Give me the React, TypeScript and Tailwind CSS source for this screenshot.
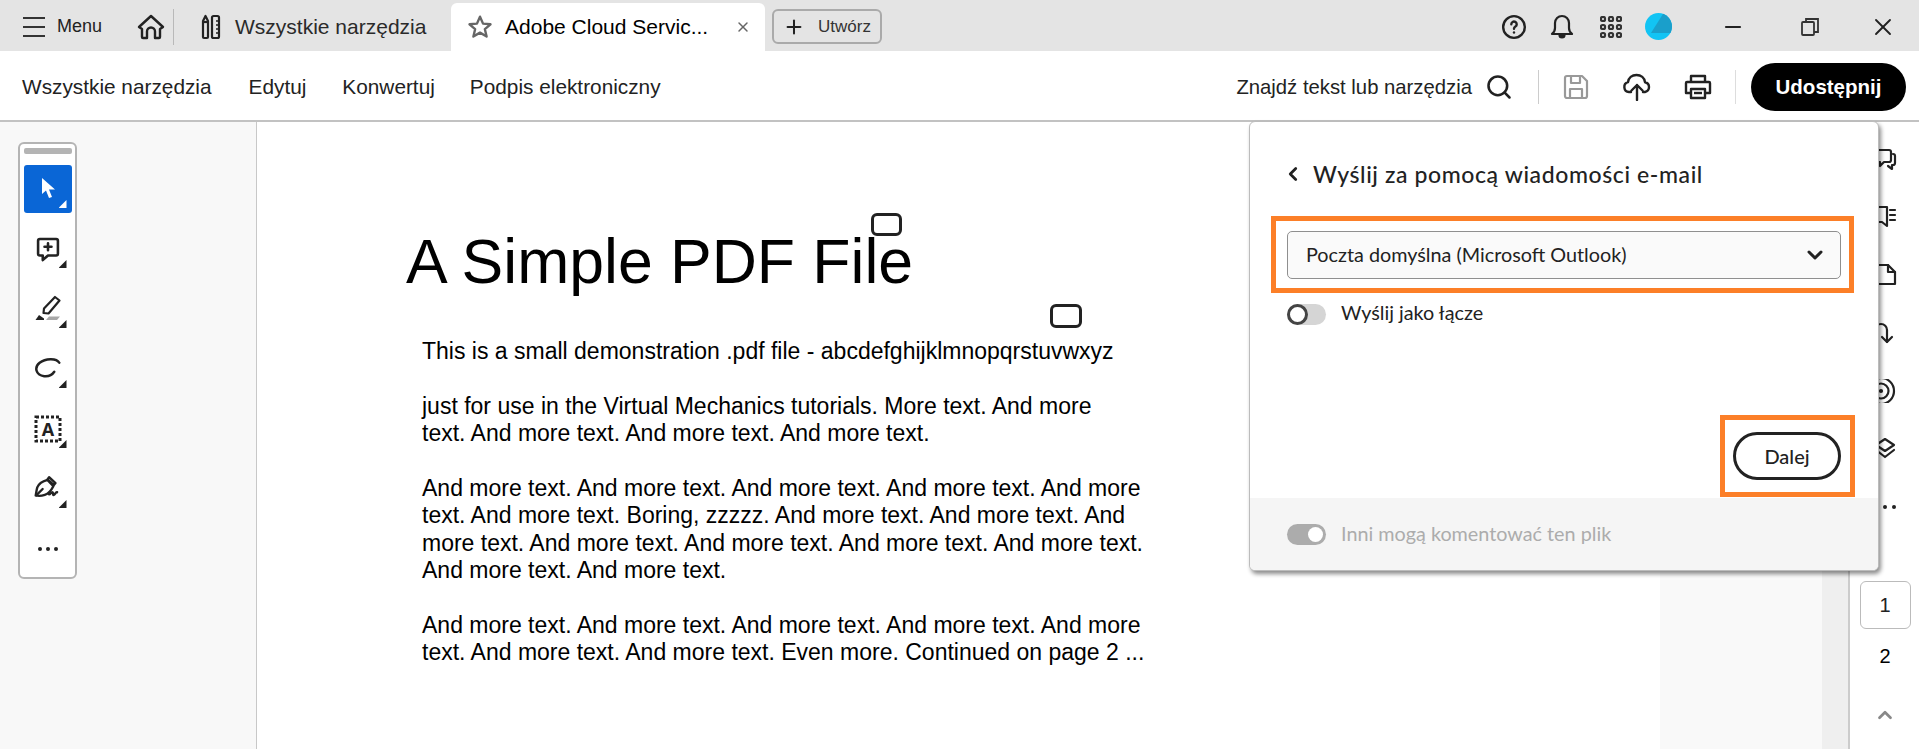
import React from "react";
import { ChevronLeft, ChevronDown, ChevronUp, Minus, Plus, Search, X } from "lucide-react";

const arial = { fontFamily: '"Liberation Sans", Arial, sans-serif' };

function Svg({ size = 24, sw = 2, children, className = "" }: { size?: number; sw?: number; children: React.ReactNode; className?: string }) {
  return (
    <svg width={size} height={size} viewBox="0 0 24 24" fill="none" stroke="currentColor" strokeWidth={sw} strokeLinecap="round" strokeLinejoin="round" className={className}>
      {children}
    </svg>
  );
}

function ToolButton({ children, active = false }: { children: React.ReactNode; active?: boolean }) {
  return (
    <div className={`relative flex h-12 w-12 items-center justify-center rounded-[3px] ${active ? "bg-[#0a66d6] text-white" : "text-[#222222]"}`}>
      {children}
      <span className={`absolute bottom-[5px] right-[5px] h-2 w-2 [clip-path:polygon(100%_0,100%_100%,0_100%)] ${active ? "bg-white" : "bg-[#222222]"}`} />
    </div>
  );
}

function Toolbar() {
  return (
    <div className="mt-5 ml-[18px] flex h-[437px] w-[59px] flex-col items-center rounded-[6px] border-2 border-[#b4b4b4] bg-white pt-1">
      <div className="h-[6px] w-12 rounded-[2px] bg-[#b4b4b4]" />
      <div className="mt-[11px] flex flex-col gap-3">
        <ToolButton active>
          <svg width="24" height="24" viewBox="0 0 24 24"><path d="M6 1v16l4-3.500L13 21l3-1-3-7.500h6z" fill="currentColor" /></svg>
        </ToolButton>
        <ToolButton>
          <Svg size={28} sw={2.200}>
            <path d="M5 3.500h14a1.500 1.500 0 0 1 1.500 1.500v11a1.500 1.500 0 0 1-1.500 1.500h-7l-4.500 4v-4H5A1.500 1.500 0 0 1 3.500 16V5A1.500 1.500 0 0 1 5 3.500z" />
            <path d="M12 7v6M9 10h6" />
          </Svg>
        </ToolButton>
        <ToolButton>
          <svg width="28" height="28" viewBox="0 0 28 28" fill="none" stroke="currentColor" strokeWidth="2.200" strokeLinejoin="round">
            <path d="M21 2l4.500 3.500-11 13-5-.5.500-4.500z" />
            <path d="M1.500 25l3.500-5 5 3.500v1.500z" fill="currentColor" stroke="none" />
            <path d="M12 25l3-3.500h11L23 25z" fill="#a8a8a8" stroke="none" />
          </svg>
        </ToolButton>
        <ToolButton>
          <Svg size={27} sw={2.200}>
            <path d="M22.500 6C20 1.500 10 2 5 6 0 10 1.500 17 9 18c4 .5 7-1 9-4" />
          </Svg>
        </ToolButton>
        <ToolButton>
          <svg width="28" height="28" viewBox="0 0 28 28" fill="none">
            <rect x="2" y="2" width="24" height="24" stroke="currentColor" strokeWidth="3" strokeDasharray="3 2" />
            <text x="14" y="21" textAnchor="middle" fontSize="18" fontWeight="700" fill="currentColor" style={{ fontFamily: '"Open Sans", sans-serif' }}>A</text>
          </svg>
        </ToolButton>
        <ToolButton>
          <svg width="30" height="30" viewBox="0 0 28 28" fill="none" stroke="currentColor" strokeWidth="2.200" strokeLinejoin="round" strokeLinecap="round">
            <path d="M15 3l6 5.500-1.500 1.800L13.500 5z" />
            <path d="M13.500 5.500c-3.500 1-8 3-9.500 7-.8 2.500-1 5.500-1.500 7.500 2 .5 6 .3 8.500-.5 3-1 6-4 8-8z" />
            <path d="M3 20l6-6" />
            <path d="M15 19c1.500 0 1.500-2 3-2s0 3 1.500 2.500 1.500-3 3-2.500" />
          </svg>
        </ToolButton>
      </div>
      <div className="mt-[34px] flex gap-[4px]">
        <span className="h-[4px] w-[4px] rounded-full bg-[#222222]" />
        <span className="h-[4px] w-[4px] rounded-full bg-[#222222]" />
        <span className="h-[4px] w-[4px] rounded-full bg-[#222222]" />
      </div>
    </div>
  );
}

function TopBar() {
  return (
    <div className="flex h-[51px] shrink-0 items-center bg-[#e4e4e4] pt-[2px] text-[#222222]" style={arial}>
      <div className="ml-[23px] flex w-[22px] flex-col gap-[7px]">
        <span className="h-[2px] bg-[#333333]" />
        <span className="h-[2px] bg-[#333333]" />
        <span className="h-[2px] bg-[#333333]" />
      </div>
      <span className="ml-[12px] text-[18px]">Menu</span>
      <div className="ml-[35px]">
        <svg width="28" height="26" viewBox="0 0 28 26" fill="none" stroke="#222222" strokeWidth="2.400" strokeLinejoin="round">
          <path d="M2 13L14 2l12 11-3 2v8a1 1 0 0 1-1 1h-4v-6.500a4 4 0 0 0-8 0V24H6a1 1 0 0 1-1-1v-8z" />
        </svg>
      </div>
      <div className="ml-[8px] h-[36px] w-px bg-[#b9b9b9]" />
      <div className="ml-[27px]">
        <svg width="20" height="26" viewBox="0 0 20 26" fill="none" stroke="#222222" strokeWidth="2.200" strokeLinejoin="round">
          <path d="M2 7l2.500-5L7 7v16a1 1 0 0 1-1 1H3a1 1 0 0 1-1-1z" />
          <path d="M2 8h5" />
          <rect x="11" y="2" width="7" height="22" rx="1.500" />
          <path d="M15 7h3M15 11h3M15 15h3M15 19h3" strokeWidth="1.500" />
        </svg>
      </div>
      <span className="ml-[14px] w-[216px] text-[21px] text-[#2a2a2a]">Wszystkie narzędzia</span>
      <div className="-mt-[2px] flex h-[48px] w-[314px] items-center self-end rounded-t-[6px] bg-white">
        <svg className="ml-[16px]" width="26" height="26" viewBox="0 0 24 24" fill="none" stroke="#666666" strokeWidth="2.200" strokeLinejoin="round">
          <path d="M12 2.500l2.800 6.400 6.900.6-5.200 4.500 1.600 6.800L12 17.200l-6.100 3.600 1.600-6.800L2.300 9.500l6.900-.6z" />
        </svg>
        <span className="ml-[12px] w-[230px] whitespace-nowrap text-[21px] text-black">Adobe Cloud Servic...</span>
        <X size={16} strokeWidth={2.200} className="text-[#666666]" />
      </div>
      <div className="ml-[7px] flex h-[35px] w-[110px] items-center rounded-[6px] border-2 border-[#aaaaaa]">
        <Plus size={22} strokeWidth={2.200} className="ml-[9px] text-[#222222]" />
        <span className="ml-[13px] text-[17px] text-[#333333]">Utwórz</span>
      </div>
      <div className="ml-auto flex items-center">
        <Svg size={26} sw={2.200}>
          <circle cx="12" cy="12" r="10" />
          <path d="M9.500 9.500a2.500 2.500 0 1 1 3.800 2.100c-.9.600-1.300 1-1.300 2" />
          <path d="M12 17v.1" />
        </Svg>
        <svg className="ml-[23px]" width="24" height="26" viewBox="0 0 24 26" fill="none" stroke="#222222" strokeWidth="2.200" strokeLinejoin="round">
          <path d="M2 20c2-1.500 3-3 3-6V9a7 7 0 0 1 14 0v5c0 3 1 4.500 3 6z" />
          <path d="M9.500 21a2.500 2.500 0 0 0 5 0" fill="#222222" />
        </svg>
        <svg className="ml-[26px]" width="22" height="22" viewBox="0 0 22 22" fill="none" stroke="#333333" strokeWidth="2.200">
          {[3, 11, 19].map((y) => [3, 11, 19].map((x) => <rect key={`${x}-${y}`} x={x - 2} y={y - 2} width="4" height="4" rx="1.500" />))}
        </svg>
        <div className="relative ml-[23px] h-[27px] w-[27px] overflow-hidden rounded-full bg-[#12c4f4]">
          <div className="absolute left-[6px] top-0 h-[20px] w-[21px] bg-[#1a9fcb] [clip-path:polygon(60%_0,100%_0,100%_100%,0_100%)]" />
        </div>
        <Minus size={24} strokeWidth={2.200} className="ml-[49px] text-[#222222]" />
        <svg className="ml-[55px]" width="20" height="20" viewBox="0 0 20 20" fill="none" stroke="#333333" strokeWidth="1.800">
          <rect x="2" y="5" width="12" height="13" rx="1" />
          <path d="M6 5V2h12v13h-4" />
        </svg>
        <X size={28} strokeWidth={1.600} className="ml-[49px] mr-[22px] text-[#222222]" />
      </div>
    </div>
  );
}

function NavBar() {
  return (
    <div className="flex h-[71px] shrink-0 items-center border-b-2 border-[#c2c2c2] bg-white pt-[3px] text-[20.800px] text-[#222222]" style={arial}>
      <span className="ml-[22px]">Wszystkie narzędzia</span>
      <span className="ml-[37px]">Edytuj</span>
      <span className="ml-[36px]">Konwertuj</span>
      <span className="ml-[35px]">Podpis elektroniczny</span>
      <div className="ml-auto flex items-center">
        <span className="text-[20.300px]">Znajdź tekst lub narzędzia</span>
        <Search size={28} strokeWidth={2.200} className="ml-[13px]" />
        <div className="ml-[25px] h-[34px] w-px bg-[#cccccc]" />
        <svg className="ml-[24px]" width="26" height="26" viewBox="0 0 26 26" fill="none" stroke="#999999" strokeWidth="2.200" strokeLinejoin="round">
          <path d="M4 2h15l5 5v15a2 2 0 0 1-2 2H4a2 2 0 0 1-2-2V4a2 2 0 0 1 2-2z" />
          <path d="M8 2v7h9V2M7 24v-9h12v9" />
        </svg>
        <svg className="ml-[33px]" width="30" height="28" viewBox="0 0 30 28" fill="none" stroke="#222222" strokeWidth="2.400" strokeLinecap="round" strokeLinejoin="round">
          <path d="M9 19H7a5 5 0 0 1-1-9.800C6.500 5 10 2 14.500 2S22.500 5 23 9.200A5 5 0 0 1 23 19h-2" />
          <path d="M15 27V12M9.500 17.500L15 12l5.500 5.500" />
        </svg>
        <svg className="ml-[32px]" width="28" height="26" viewBox="0 0 28 26" fill="none" stroke="#222222" strokeWidth="2.400" strokeLinejoin="round">
          <path d="M7 8V2h14v6" />
          <path d="M7 19H2V9a1 1 0 0 1 1-1h22a1 1 0 0 1 1 1v10h-5" />
          <rect x="7" y="15" width="14" height="9" />
          <path d="M10 19h8" />
        </svg>
        <div className="ml-[23px] h-[34px] w-px bg-[#dddddd]" />
        <div className="ml-[15px] mr-[13px] flex h-[48px] w-[155px] items-center justify-center rounded-full bg-black text-[20.500px] font-bold text-white">Udostępnij</div>
      </div>
    </div>
  );
}

function PdfPage() {
  return (
    <div className="relative w-[1404px] shrink-0 border-l border-[#c8c8c8] bg-white text-black" style={arial}>
      <h1 className="ml-[149px] mt-[103px] whitespace-nowrap text-[62.500px] font-normal leading-[72px]">A Simple PDF File</h1>
      <div className="ml-[165px] mt-[41px] w-[800px] text-[23px] leading-[27.400px]">
        <p>This is a small demonstration .pdf file - abcdefghijklmnopqrstuvwxyz</p>
        <p className="mt-[27.400px]">just for use in the Virtual Mechanics tutorials. More text. And more<br />text. And more text. And more text. And more text.</p>
        <p className="mt-[27.400px]">And more text. And more text. And more text. And more text. And more<br />text. And more text. Boring, zzzzz. And more text. And more text. And<br />more text. And more text. And more text. And more text. And more text.<br />And more text. And more text.</p>
        <p className="mt-[27.400px]">And more text. And more text. And more text. And more text. And more<br />text. And more text. And more text. Even more. Continued on page 2 ...</p>
      </div>
      <div className="absolute left-[614px] top-[91px] h-[23px] w-[31px] rounded-[6px] border-[3px] border-[#222222]" />
      <div className="absolute left-[793px] top-[182px] h-[24px] w-[32px] rounded-[6px] border-[3px] border-[#222222]" />
    </div>
  );
}

function RightRail() {
  return (
    <div className="flex w-[71px] shrink-0 flex-col items-center border-l-2 border-[#cccccc] bg-white text-[#222222]" style={arial}>
      <div className="mt-[25px] flex flex-col items-center gap-[34px]">
        <Svg size={24} sw={2.200}><path d="M4 3h12a2 2 0 0 1 2 2v8a2 2 0 0 1-2 2h-5l-4 4v-4H4" /><path d="M20 7a2 2 0 0 1 2 2v7a2 2 0 0 1-2 2h-1v4l-4-3" /></Svg>
        <Svg size={24} sw={2.200}><path d="M2 2h12v19l-5-4H2" /><path d="M17 5h5M17 10h5M17 15h5" /></Svg>
        <Svg size={24} sw={2.200}><path d="M2 2h13l7 7v12H2" /><path d="M15 2v7h7" /></Svg>
        <Svg size={24} sw={2.200}><path d="M2 20V9a6 6 0 0 1 12 0v12" /><path d="M9 16l5 5 5-5" /></Svg>
        <Svg size={24} sw={2.200}><circle cx="8" cy="12" r="13" /><circle cx="8" cy="12" r="7.500" /><circle cx="8" cy="12" r="1" fill="currentColor" /></Svg>
        <Svg size={24} sw={2.200}><path d="M12 2l9 6-9 6-9-6zM21 13l-9 7-9-7" /></Svg>
        <div className="flex h-[24px] items-center gap-[5px]">
          <span className="h-[4px] w-[4px] rounded-full bg-[#222222]" />
          <span className="h-[4px] w-[4px] rounded-full bg-[#222222]" />
          <span className="h-[4px] w-[4px] rounded-full bg-[#222222]" />
        </div>
      </div>
      <div className="ml-[1px] mt-[62px] flex h-[48px] w-[51px] items-center justify-center rounded-[6px] border border-[#bbbbbb] text-[20px]">1</div>
      <div className="ml-[1px] mt-[11px] flex h-[32px] items-center text-[20px] text-black">2</div>
      <ChevronUp size={22} strokeWidth={3} className="ml-[1px] mt-[32px] text-[#888888]" />
    </div>
  );
}

function Popover() {
  const adobe = { fontFamily: 'Lato, "Open Sans", sans-serif' };
  return (
    <div className="absolute left-[1249px] top-[121px] flex h-[450px] w-[630px] flex-col overflow-hidden rounded-[6px] border border-[#bcbcbc] bg-white text-[#222222] shadow-[2px_3px_4px_rgba(0,0,0,0.45)]" style={adobe}>
      <div className="flex flex-1 flex-col px-[37px] pt-[38px]">
        <div className="flex h-[28px] items-center">
          <ChevronLeft size={22} strokeWidth={3} className="-ml-[5px]" />
          <span className="ml-[9px] whitespace-nowrap text-[23px] font-medium tracking-[0.6px]">Wyślij za pomocą wiadomości e-mail</span>
        </div>
        <div className="mt-[43px] flex h-[48px] items-center justify-between rounded-[5px] border border-[#8f8f8f] bg-[#fafafa] px-[18px] text-[19.800px]">
          <span className="pb-[1px]">Poczta domyślna (Microsoft Outlook)</span>
          <ChevronDown size={24} strokeWidth={3} className="-mr-[5px]" />
        </div>
        <div className="mt-[23px] flex h-[24px] items-center">
          <div className="relative h-[21px] w-[39px] rounded-full bg-[#d5d5d5]">
            <div className="absolute left-0 top-0 h-[21px] w-[21px] rounded-full border-[3px] border-[#444444] bg-white" />
          </div>
          <span className="ml-[15px] pb-[2px] text-[19.800px]">Wyślij jako łącze</span>
        </div>
        <div className="mb-[18px] mt-auto flex justify-end">
          <div className="flex h-[48px] w-[108px] items-center justify-center rounded-full border-[3px] border-[#222222] bg-white text-[20px] font-medium">Dalej</div>
        </div>
      </div>
      <div className="flex h-[72px] items-center bg-[#f5f5f5] px-[37px]">
        <div className="relative h-[21px] w-[39px] rounded-full bg-[#acacac]">
          <div className="absolute right-[3px] top-[3px] h-[15px] w-[15px] rounded-full bg-white" />
        </div>
        <span className="ml-[15px] pb-[1px] text-[19.800px] text-[#acacac]">Inni mogą komentować ten plik</span>
      </div>
    </div>
  );
}

export default function App() {
  return (
    <div className="relative flex h-[749px] w-full flex-col overflow-hidden bg-white">
      <TopBar />
      <NavBar />
      <div className="flex min-h-0 flex-1">
        <aside className="w-[256px] shrink-0 bg-[#f8f8f8]">
          <Toolbar />
        </aside>
        <PdfPage />
        <div className="w-[162px] shrink-0 bg-[#f9f9f9]" />
        <div className="w-[26px] shrink-0 bg-[#efefef]" />
        <RightRail />
      </div>
      <Popover />
      <div className="absolute left-[1271px] top-[216px] h-[77px] w-[583px] border-[5px] border-[#fc7f28]" />
      <div className="absolute left-[1720px] top-[415px] h-[82px] w-[135px] border-[5px] border-[#fc7f28]" />
    </div>
  );
}
